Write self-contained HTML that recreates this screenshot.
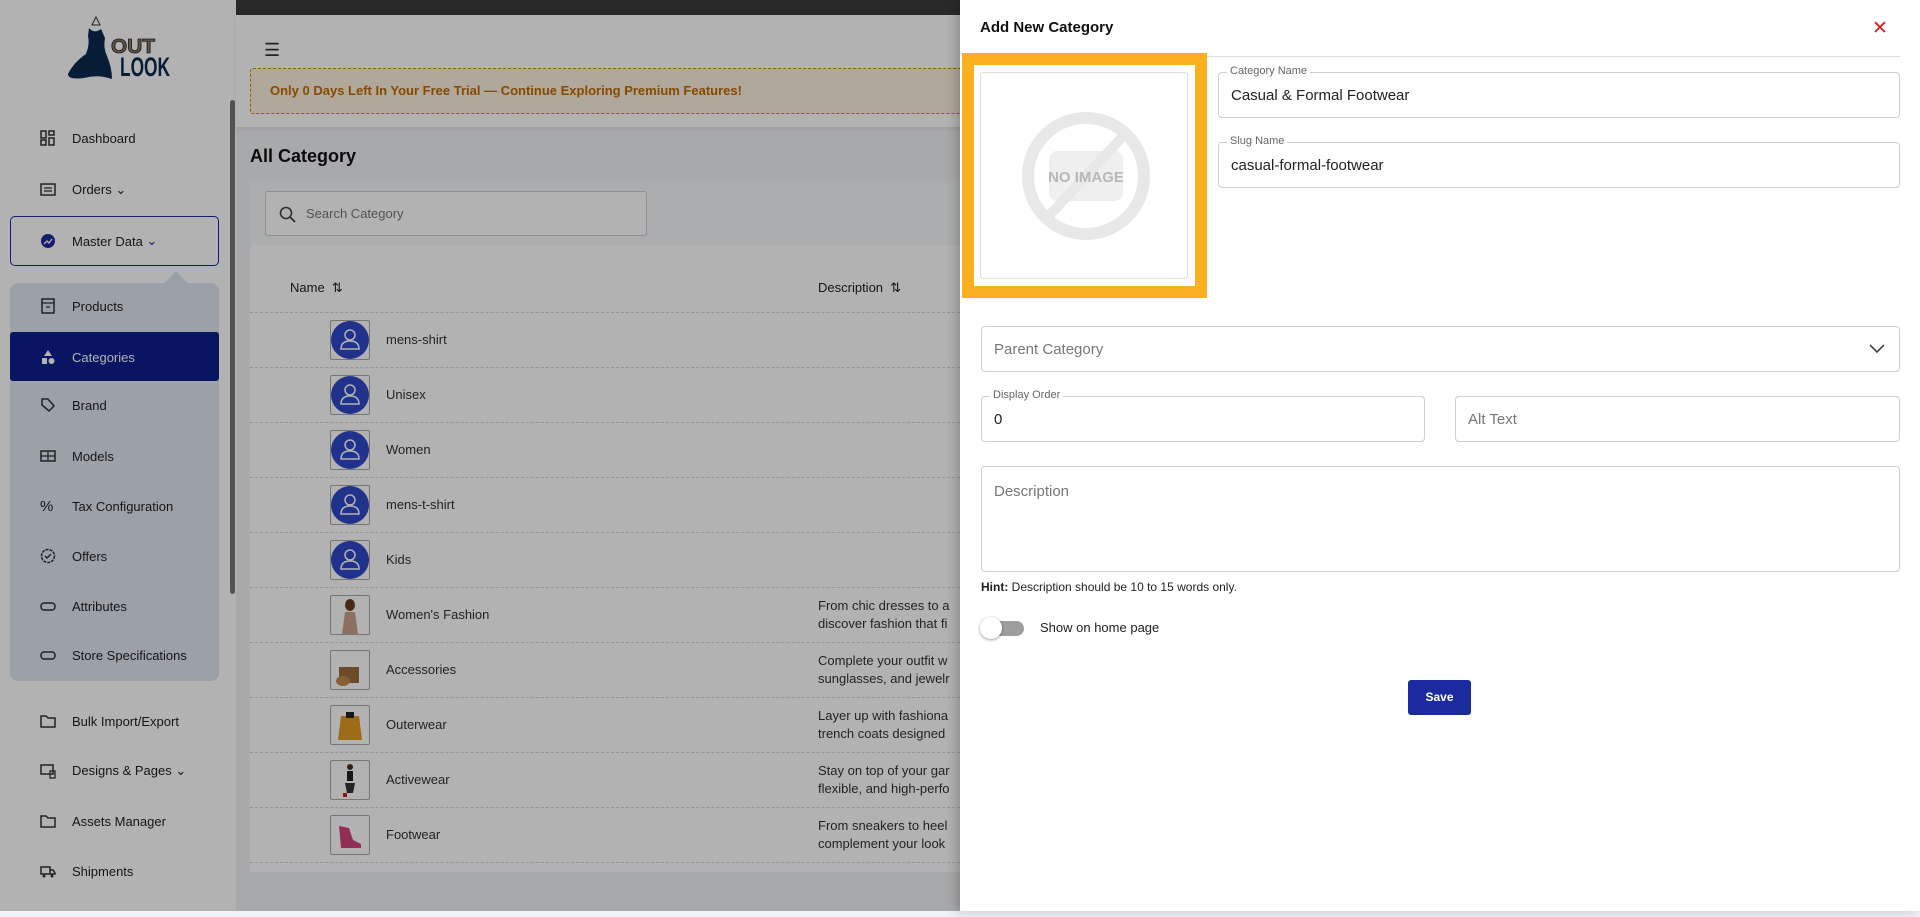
<!DOCTYPE html>
<html><head><meta charset="utf-8"><style>
*{box-sizing:border-box;margin:0;padding:0}
body{width:1920px;height:911px;overflow:hidden;font-family:"Liberation Sans",sans-serif;background:#f1f2f4;position:relative;color:#222}
.sb{position:absolute;left:0;top:0;width:236px;height:911px;background:#fff}
.sbar{position:absolute;left:230px;top:100px;width:5px;height:494px;background:#777;border-radius:3px}
.mi{position:absolute;left:40px;font-size:13px;color:#222;display:flex;align-items:center}
.mi svg{width:16px;height:16px;margin-right:16px}
.sub{position:absolute;left:10px;top:283px;width:209px;height:398px;background:#dfe5f3;border-radius:8px}
.md{position:absolute;left:10px;top:216px;width:209px;height:50px;border:1.5px solid #1a2a9c;border-radius:5px}
.cat{position:absolute;left:10px;top:332px;width:209px;height:49px;background:#0d1f8f;border-radius:3px}
.topbar{position:absolute;left:236px;top:0;width:1684px;height:15px;background:#3c3c3c}
.hdr{position:absolute;left:236px;top:15px;width:1684px;height:112px;background:#fff;box-shadow:0 2px 4px rgba(0,0,0,.08)}
.banner{position:absolute;left:250px;top:68px;width:1700px;height:46px;background:#fdf1df;border:1.5px dashed #d98300;border-radius:3px;color:#c06a00;font-weight:bold;font-size:13px;padding:14px 0 0 19px}
.card{position:absolute;left:250px;top:181px;width:720px;height:691px;background:#fff}
.tool{position:absolute;left:0;top:0;width:100%;height:64px;background:#f7f8f9}
.search{position:absolute;left:15px;top:10px;width:382px;height:45px;border:1px solid #ccc;border-radius:3px;background:#fff;font-size:13px;color:#777;padding:14px 0 0 40px}
.row{position:absolute;left:0;width:100%;height:55px;border-top:1px dashed #d6d6d6}
.th{position:absolute;width:40px;height:40px;left:80px;top:7px;border:1px solid #aaa;border-radius:2px;background:#fff;overflow:hidden}
.nm{position:absolute;left:136px;top:19px;font-size:13px;color:#333}
.ds{position:absolute;left:568px;top:9px;font-size:13px;color:#333;line-height:18px;white-space:nowrap}
.ov{position:absolute;left:0;top:0;width:960px;height:911px;background:rgba(0,0,0,.3)}
.modal{position:absolute;left:960px;top:0;width:960px;height:911px;background:#fff;box-shadow:-4px 0 10px rgba(0,0,0,.2)}
.inp{position:absolute;border:1px solid #cfcfcf;border-radius:4px;font-size:15px;color:#222;padding:0 12px;display:flex;align-items:center}
.lbl{position:absolute;top:-8px;left:8px;background:#fff;padding:0 3px;font-size:11px;color:#666}
.ph{color:#777}
</style></head><body>
<div class="sb">
 <svg style="position:absolute;left:0;top:0" width="236" height="90" viewBox="0 0 236 90">
  <path d="M96 17 L92 25 L100 25 Z" fill="none" stroke="#333" stroke-width="1"/>
  <path d="M89 28 Q94 34 101 29 L105 38 Q103 48 107 56 Q112 68 112 79 Q98 74 84 78 Q68 80 68 74 Q74 62 86 54 Q90 44 88 36 Z" fill="#0b2a4f"/>
  <text x="111" y="53" font-family="Liberation Sans" font-weight="bold" font-size="20" fill="#8a7a62" stroke="#222" stroke-width=".8" textLength="44" lengthAdjust="spacingAndGlyphs">OUT</text>
  <text x="120" y="76" font-family="Liberation Sans" font-weight="bold" font-size="27" fill="#0b2a4f" textLength="50" lengthAdjust="spacingAndGlyphs">LOOK</text>
 </svg>
 <div class="mi" style="top:130px"><svg viewBox="0 0 16 16"><rect x="1" y="1" width="5" height="7" fill="none" stroke="#333" stroke-width="1.5"/><rect x="9" y="1" width="5" height="4" fill="none" stroke="#333" stroke-width="1.5"/><rect x="1" y="10" width="5" height="5" fill="none" stroke="#333" stroke-width="1.5"/><rect x="9" y="8" width="5" height="7" fill="none" stroke="#333" stroke-width="1.5"/></svg>Dashboard</div>
 <div class="mi" style="top:182px"><svg viewBox="0 0 16 16"><rect x="1" y="2" width="14" height="11" fill="none" stroke="#333" stroke-width="1.5"/><path d="M4 6h8M4 9h8" stroke="#333" stroke-width="1.3"/></svg>Orders&nbsp;⌄</div>
 <div class="md"></div>
 <div class="mi" style="top:233px"><svg viewBox="0 0 16 16"><circle cx="8" cy="8" r="7" fill="#1a2a9c"/><path d="M4 11l3-3 2 2 3-4" stroke="#fff" stroke-width="1.3" fill="none"/></svg>Master Data&nbsp;<span style="color:#1a2a9c">⌄</span></div>
 <div class="sub"></div>
 <svg style="position:absolute;left:164px;top:270px" width="24" height="14"><path d="M0 14 L12 1 L24 14Z" fill="#dfe5f3"/></svg>
 <div class="mi" style="top:298px"><svg viewBox="0 0 16 16"><rect x="2" y="1" width="12" height="14" fill="none" stroke="#333" stroke-width="1.5"/><path d="M2 5h12M6 9h4" stroke="#333" stroke-width="1.3"/></svg>Products</div>
 <div class="cat"></div>
 <div class="mi" style="top:349px;color:#fff"><svg viewBox="0 0 16 16"><path d="M8 1l4 6H4z M2 9h5v6H2z" fill="#fff"/><circle cx="11.5" cy="12" r="3" fill="#fff"/></svg>Categories</div>
 <div class="mi" style="top:397px"><svg viewBox="0 0 16 16"><path d="M2 2h6l6 7-5 5-7-6z" fill="none" stroke="#333" stroke-width="1.5"/></svg>Brand</div>
 <div class="mi" style="top:448px"><svg viewBox="0 0 16 16"><rect x="1" y="3" width="14" height="10" fill="none" stroke="#333" stroke-width="1.5"/><path d="M8 3v10M1 8h14" stroke="#333" stroke-width="1.3"/></svg>Models</div>
 <div class="mi" style="top:498px"><span style="width:16px;margin-right:16px;font-size:15px">%</span>Tax Configuration</div>
 <div class="mi" style="top:548px"><svg viewBox="0 0 16 16"><circle cx="8" cy="8" r="6.5" fill="none" stroke="#333" stroke-width="1.5" stroke-dasharray="3 1"/><path d="M5 8l2 2 4-4" stroke="#333" stroke-width="1.5" fill="none"/></svg>Offers</div>
 <div class="mi" style="top:598px"><svg viewBox="0 0 16 16"><rect x="1" y="5" width="14" height="7" rx="3" fill="none" stroke="#333" stroke-width="1.5"/></svg>Attributes</div>
 <div class="mi" style="top:647px"><svg viewBox="0 0 16 16"><rect x="1" y="5" width="14" height="7" rx="3" fill="none" stroke="#333" stroke-width="1.5"/></svg>Store Specifications</div>
 <div class="mi" style="top:713px"><svg viewBox="0 0 16 16"><path d="M1 3h5l2 2h7v9H1z" fill="none" stroke="#333" stroke-width="1.5"/></svg>Bulk Import/Export</div>
 <div class="mi" style="top:763px"><svg viewBox="0 0 16 16"><rect x="1" y="2" width="12" height="9" fill="none" stroke="#333" stroke-width="1.5"/><rect x="10" y="8" width="5" height="7" fill="none" stroke="#333" stroke-width="1.3"/></svg>Designs &amp; Pages&nbsp;⌄</div>
 <div class="mi" style="top:813px"><svg viewBox="0 0 16 16"><path d="M1 3h5l2 2h7v9H1z" fill="none" stroke="#333" stroke-width="1.5"/></svg>Assets Manager</div>
 <div class="mi" style="top:863px"><svg viewBox="0 0 16 16"><path d="M1 4h9v7H1zM10 7h3l2 3v1h-5z" fill="none" stroke="#333" stroke-width="1.5"/><circle cx="4" cy="13" r="1.5" fill="#333"/><circle cx="12" cy="13" r="1.5" fill="#333"/></svg>Shipments</div>
 <div class="sbar"></div>
</div>
<div class="topbar"></div>
<div class="hdr"><div style="position:absolute;left:28px;top:25px;font-size:18px;color:#333">☰</div></div>
<div class="banner" style="top:68px">Only 0 Days Left In Your Free Trial — Continue Exploring Premium Features!</div>
<div style="position:absolute;left:250px;top:146px;font-size:18px;font-weight:bold;color:#111">All Category</div>
<div class="card">
 <div class="tool"><div class="search"><svg style="position:absolute;left:13px;top:14px" width="18" height="18" viewBox="0 0 18 18"><circle cx="7" cy="7" r="5.5" fill="none" stroke="#444" stroke-width="1.6"/><path d="M11 11l5 5" stroke="#444" stroke-width="1.8"/></svg>Search Category</div></div>
 <div style="position:absolute;left:40px;top:99px;font-size:13px;color:#222">Name &nbsp;⇅</div>
 <div style="position:absolute;left:568px;top:99px;font-size:13px;color:#222">Description &nbsp;⇅</div>
 <div class="row" style="top:131px"><div class="th"><svg width="38" height="38"><circle cx="19" cy="19" r="19" fill="#2f48c8"/><circle cx="19" cy="14" r="5" fill="none" stroke="#fff" stroke-width="1.5"/><path d="M10 28q0-8 9-8t9 8z" fill="none" stroke="#fff" stroke-width="1.5"/></svg></div><div class="nm">mens-shirt</div></div>
 <div class="row" style="top:186px"><div class="th"><svg width="38" height="38"><circle cx="19" cy="19" r="19" fill="#2f48c8"/><circle cx="19" cy="14" r="5" fill="none" stroke="#fff" stroke-width="1.5"/><path d="M10 28q0-8 9-8t9 8z" fill="none" stroke="#fff" stroke-width="1.5"/></svg></div><div class="nm">Unisex</div></div>
 <div class="row" style="top:241px"><div class="th"><svg width="38" height="38"><circle cx="19" cy="19" r="19" fill="#2f48c8"/><circle cx="19" cy="14" r="5" fill="none" stroke="#fff" stroke-width="1.5"/><path d="M10 28q0-8 9-8t9 8z" fill="none" stroke="#fff" stroke-width="1.5"/></svg></div><div class="nm">Women</div></div>
 <div class="row" style="top:296px"><div class="th"><svg width="38" height="38"><circle cx="19" cy="19" r="19" fill="#2f48c8"/><circle cx="19" cy="14" r="5" fill="none" stroke="#fff" stroke-width="1.5"/><path d="M10 28q0-8 9-8t9 8z" fill="none" stroke="#fff" stroke-width="1.5"/></svg></div><div class="nm">mens-t-shirt</div></div>
 <div class="row" style="top:351px"><div class="th"><svg width="38" height="38"><circle cx="19" cy="19" r="19" fill="#2f48c8"/><circle cx="19" cy="14" r="5" fill="none" stroke="#fff" stroke-width="1.5"/><path d="M10 28q0-8 9-8t9 8z" fill="none" stroke="#fff" stroke-width="1.5"/></svg></div><div class="nm">Kids</div></div>
 <div class="row" style="top:406px"><div class="th"><svg width="38" height="38"><ellipse cx="19" cy="9" rx="5" ry="6" fill="#6b3b20"/><path d="M11 38l3-22h10l3 22z" fill="#c9a28a"/></svg></div><div class="nm">Women's Fashion</div><div class="ds">From chic dresses to a<br>discover fashion that fi</div></div>
 <div class="row" style="top:461px"><div class="th"><svg width="38" height="38"><rect x="8" y="16" width="20" height="16" fill="#9c6a3a"/><ellipse cx="12" cy="30" rx="7" ry="5" fill="#c28950"/></svg></div><div class="nm">Accessories</div><div class="ds">Complete your outfit w<br>sunglasses, and jewelr</div></div>
 <div class="row" style="top:516px"><div class="th"><svg width="38" height="38"><path d="M10 10h18l3 24H7z" fill="#e39a22"/><path d="M15 6h8v6h-8z" fill="#222"/></svg></div><div class="nm">Outerwear</div><div class="ds">Layer up with fashiona<br>trench coats designed</div></div>
 <div class="row" style="top:571px"><div class="th"><svg width="38" height="38"><circle cx="19" cy="6" r="3" fill="#4a2e1e"/><path d="M16 10h6v10h-6z" fill="#222"/><path d="M14 22h10l-2 10h-6z" fill="#333"/><rect x="12" y="32" width="4" height="4" fill="#c22"/></svg></div><div class="nm">Activewear</div><div class="ds">Stay on top of your gar<br>flexible, and high-perfo</div></div>
 <div class="row" style="top:626px"><div class="th"><svg width="38" height="38"><path d="M8 10l10 2 4 12 8 4v4H10z" fill="#d2427a"/></svg></div><div class="nm">Footwear</div><div class="ds">From sneakers to heel<br>complement your look</div></div>
 <div class="row" style="top:681px"></div>
</div>
<div class="ov"></div>
<div class="modal">
 <div style="position:absolute;left:20px;top:19px;font-size:15px;font-weight:bold;color:#111">Add New Category</div>
 <div style="position:absolute;left:912px;top:17px;font-size:19px;color:#d42020">✕</div>
 <div style="position:absolute;left:247px;top:56px;width:693px;height:1px;background:#ddd"></div>
 <div style="position:absolute;left:2px;top:53px;width:245px;height:245px;border:12px solid #fbb022;background:#fff"></div>
 <div style="position:absolute;left:20px;top:72px;width:208px;height:207px;border:1px solid #ddd;border-radius:4px;background:#fff">
  <svg style="position:absolute;left:40px;top:38px" width="130" height="130" viewBox="0 0 130 130"><circle cx="65" cy="65" r="58" fill="none" stroke="#e8e8e8" stroke-width="12"/><rect x="28" y="40" width="74" height="50" rx="8" fill="#efefef"/><path d="M25 108L105 22" stroke="#e8e8e8" stroke-width="10"/><text x="65" y="71" text-anchor="middle" font-family="Liberation Sans" font-weight="bold" font-size="15" fill="#b8b8b8">NO IMAGE</text></svg>
 </div>
 <div class="inp" style="left:258px;top:72px;width:682px;height:46px"><span class="lbl">Category Name</span>Casual &amp; Formal Footwear</div>
 <div class="inp" style="left:258px;top:142px;width:682px;height:46px"><span class="lbl">Slug Name</span>casual-formal-footwear</div>
 <div class="inp" style="left:21px;top:326px;width:919px;height:46px"><span class="ph">Parent Category</span><svg style="position:absolute;right:14px;top:17px" width="16" height="10"><path d="M1 1l7 7 7-7" fill="none" stroke="#444" stroke-width="1.6"/></svg></div>
 <div class="inp" style="left:21px;top:396px;width:444px;height:46px"><span class="lbl">Display Order</span>0</div>
 <div class="inp" style="left:495px;top:396px;width:445px;height:46px"><span class="ph">Alt Text</span></div>
 <div class="inp" style="left:21px;top:466px;width:919px;height:106px;align-items:flex-start;padding-top:16px"><span class="ph">Description</span></div>
 <div style="position:absolute;left:21px;top:580px;font-size:12px;color:#222"><b>Hint:</b> Description should be 10 to 15 words only.</div>
 <div style="position:absolute;left:26px;top:621px;width:38px;height:15px;border-radius:8px;background:#9e9e9e"></div>
 <div style="position:absolute;left:20px;top:617px;width:22px;height:22px;border-radius:50%;background:#fff;box-shadow:0 1px 3px rgba(0,0,0,.4)"></div>
 <div style="position:absolute;left:80px;top:620px;font-size:13px;color:#222">Show on home page</div>
 <div style="position:absolute;left:448px;top:680px;width:63px;height:35px;background:#1b2b9f;border-radius:3px;color:#fff;font-size:12px;font-weight:bold;text-align:center;line-height:35px">Save</div>
</div>
</body></html>
